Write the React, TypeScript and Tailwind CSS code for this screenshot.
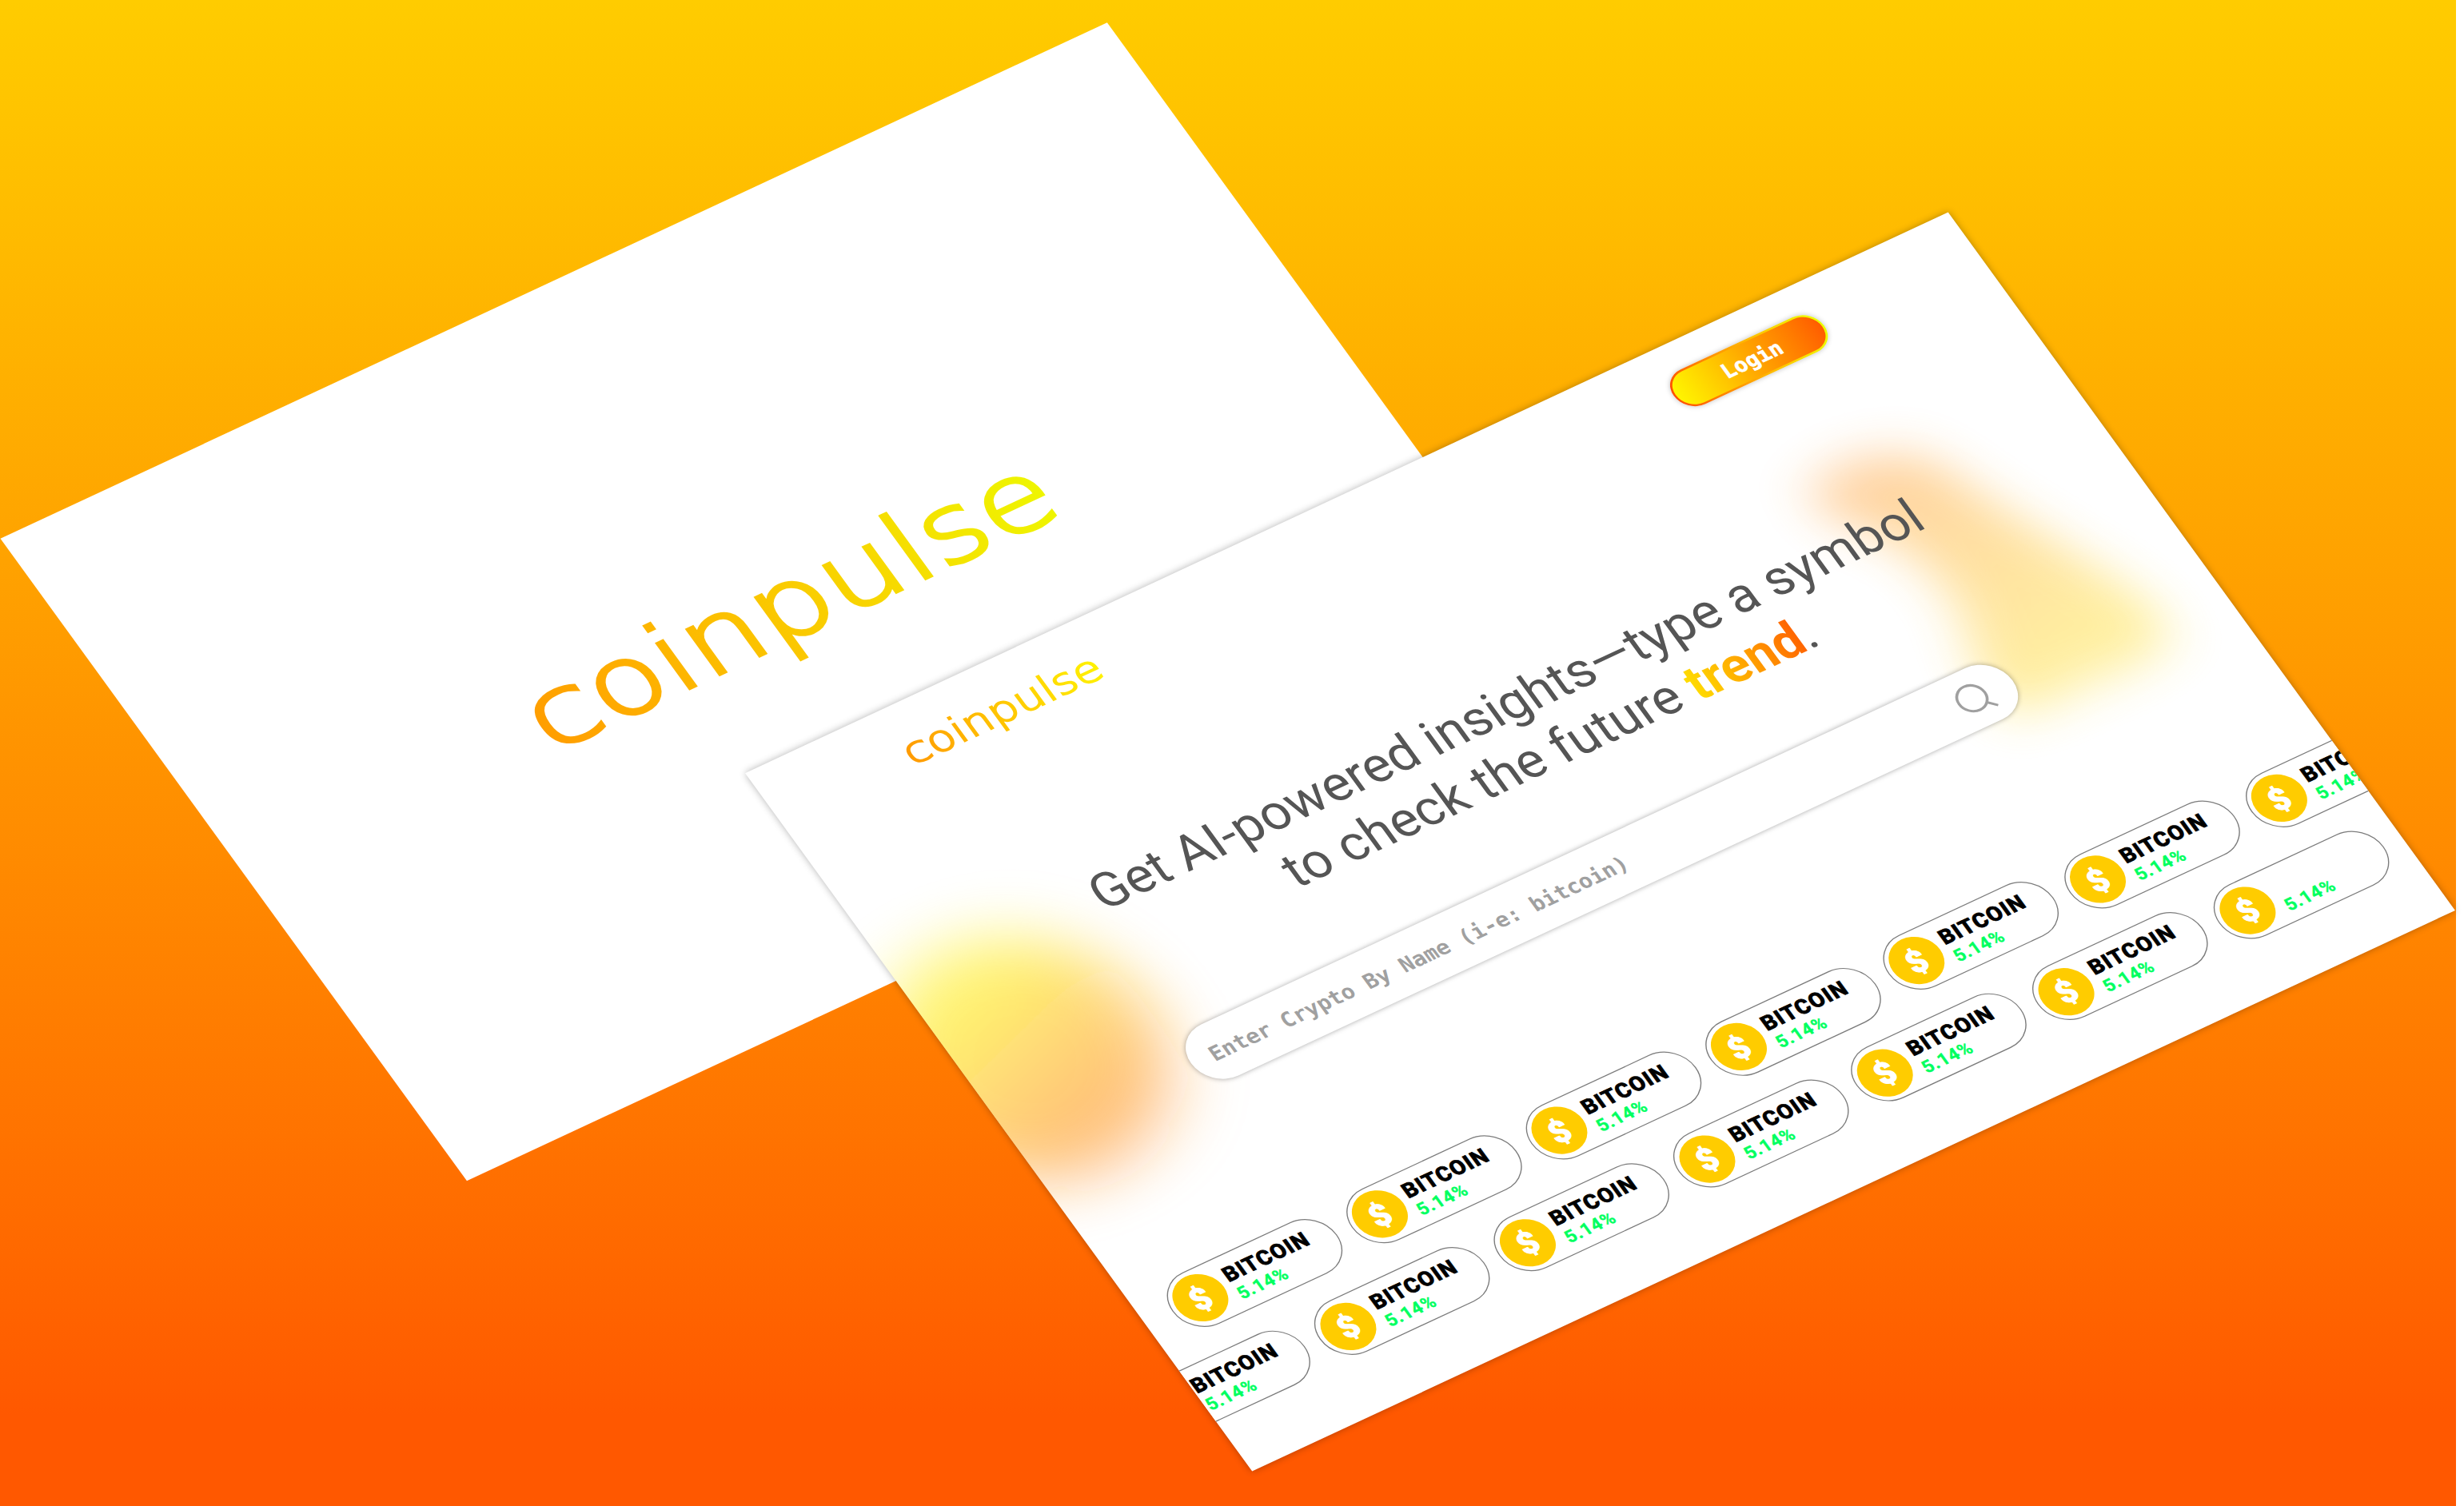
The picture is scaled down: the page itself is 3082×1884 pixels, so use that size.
const CHIP_SHIFT = ["", "", "", "", "-translate-y-[3px]", "", "translate-y-[3px]"];

function Chip({ shift, label = "BITCOIN" }: { shift: string; label?: string }) {
  return (
    <div
      className={`flex h-[61px] w-[175px] shrink-0 items-center rounded-full border border-[#7c7c7c] bg-white pl-[4px] ${shift}`}
    >
      <div className="flex size-[50px] shrink-0 items-center justify-center rounded-full bg-[#ffcc00] pt-[2px] text-[31px] leading-none font-black text-white [-webkit-text-stroke:0.9px_#ffffff]">
        $
      </div>
      <div className="flex flex-col pt-[2px] pl-[7px]">
        <span className="h-[23px] text-[21px] leading-[24px] font-extrabold tracking-[1px] text-black [-webkit-text-stroke:0.6px_#000000]">
          {label}
        </span>
        <span className="h-[22px] pl-[1px] text-[17.5px] leading-[22px] font-bold tracking-[0.6px] text-[#00ff5f] [-webkit-text-stroke:0.3px_#00ff5f]">
          5.14%
        </span>
      </div>
    </div>
  );
}

function ChipRow({ className, lastLabel }: { className: string; lastLabel?: string }) {
  return (
    <div className={`flex gap-4 ${className}`}>
      {CHIP_SHIFT.map((shift, i) => (
        <Chip key={i} shift={shift} label={i === 6 ? lastLabel : undefined} />
      ))}
    </div>
  );
}

function Blobs() {
  return (
    <svg className="pointer-events-none absolute inset-0" width="1280" height="832" viewBox="0 0 1280 832">
      <defs>
        <linearGradient id="warm" gradientUnits="userSpaceOnUse" x1="50" y1="285" x2="105" y2="450">
          <stop offset="0" stopColor="#ffee00" />
          <stop offset="1" stopColor="#ff8812" />
        </linearGradient>
        <linearGradient id="sun" gradientUnits="userSpaceOnUse" x1="1060" y1="190" x2="1130" y2="450">
          <stop offset="0" stopColor="#ff9d38" />
          <stop offset="1" stopColor="#ffdf38" />
        </linearGradient>
        <filter id="soft" x="-60%" y="-60%" width="220%" height="220%">
          <feGaussianBlur stdDeviation="32" />
        </filter>
        <filter id="soft2" x="-60%" y="-60%" width="220%" height="220%">
          <feGaussianBlur stdDeviation="24" />
        </filter>
      </defs>
      <ellipse cx="57" cy="371" rx="129" ry="130" fill="url(#warm)" opacity="0.56" filter="url(#soft)" />
      <path
        d="M1018 188 C1050 174 1100 184 1124 212 C1140 250 1148 280 1166 315 C1184 360 1218 420 1216 458 C1208 486 1165 480 1120 478 C1080 476 1050 488 1034 464 C1026 430 1052 400 1060 350 C1064 300 1040 250 1010 224 C1000 210 1002 196 1018 188 Z"
        fill="url(#sun)"
        opacity="0.47"
        filter="url(#soft2)"
      />
    </svg>
  );
}

function LandingPanel() {
  return (
    <section className="absolute top-0 left-0 h-[832px] w-[1280px] origin-top-left [transform:matrix(1.17555,-0.5482,0.76226,1.04976,932,967.2)] bg-white shadow-[0_0_7px_rgba(0,0,0,0.3)]">
      <div className="relative flex h-full flex-col overflow-hidden">
        <Blobs />
        <header className="relative flex h-[98px] items-center justify-between pr-[164px] pl-[138px]">
          <div className="origin-left scale-x-[1.17] bg-linear-to-r from-[#ff9a00] to-[#fff200] bg-clip-text pt-[8px] pb-1 font-['DejaVu_Sans'] text-[37px] leading-[44px] font-extralight text-transparent [-webkit-text-stroke:1.6px_transparent]">
            coinpulse
          </div>
          <div className="h-[41px] w-[160px] rounded-full bg-linear-to-r from-[#ff4d00] to-[#eaff00] p-[2px] shadow-[0_0_5px_rgba(0,0,0,0.25)]">
            <div className="flex h-full items-center justify-center rounded-full bg-linear-to-r from-[#fff500] via-[#ffa800] to-[#ff5c00] pt-[2px] pl-[6px] font-['DejaVu_Sans_Mono'] text-[20.5px] font-bold text-white [-webkit-text-stroke:0.5px_#ffffff]">
              Login
            </div>
          </div>
        </header>
        <h1 className="relative mt-[127px] ml-[8px] text-center text-[50px] leading-[60px] whitespace-nowrap text-[#555555]">
          Get AI-powered insights—type a symbol
          <br />
          <span className="pl-[15px]">
            to check the future{" "}
            <span className="bg-linear-to-r from-[#ffdd00] to-[#ff6200] bg-clip-text font-bold text-transparent">
              trend
            </span>
            .
          </span>
        </h1>
        <div className="relative mt-[68px] ml-[187px] flex h-[61px] w-[874px] items-center justify-between rounded-full bg-white pr-[24px] pl-[20px] shadow-[0_0_5px_rgba(0,0,0,0.35)]">
          <span className="pt-[4px] font-['DejaVu_Sans_Mono'] text-[21px] font-bold text-[#a0a0a0]">
            Enter Crypto By Name (i-e: bitcoin)
          </span>
          <svg width="34" height="34" viewBox="0 0 34 34" fill="none" stroke="#a0a0a0" strokeWidth="2.6">
            <circle cx="15.4" cy="15.6" r="13.6" />
            <path d="M25 25.4 L32.3 32.6" />
          </svg>
        </div>
        <ChipRow className="relative mt-[151.5px] ml-[28.5px]" />
        <ChipRow className="relative mt-[25.5px] ml-[-61px]" lastLabel="" />
      </div>
    </section>
  );
}

function SplashPanel() {
  return (
    <section className="absolute top-0 left-0 flex h-[832px] w-[1280px] origin-top-left [transform:matrix(1.0815,-0.50434,0.70128,0.96578,0.5,673.8)] items-center justify-center bg-white">
      <div className="scale-x-[1.18] bg-linear-to-r from-[#ff9d00] to-[#eef600] bg-clip-text pt-[10px] pb-[2px] font-['DejaVu_Sans'] text-[106px] leading-[130px] font-extralight text-transparent [-webkit-text-stroke:3.6px_transparent]">
        coinpulse
      </div>
    </section>
  );
}

export default function App() {
  return (
    <main className="relative h-[1884px] w-[3082px] overflow-hidden bg-white font-['Roboto',sans-serif]">
      <div className="h-full w-[3072px] bg-linear-to-b from-[#ffcc00] to-[#ff5800] to-94%" />
      <SplashPanel />
      <LandingPanel />
    </main>
  );
}
